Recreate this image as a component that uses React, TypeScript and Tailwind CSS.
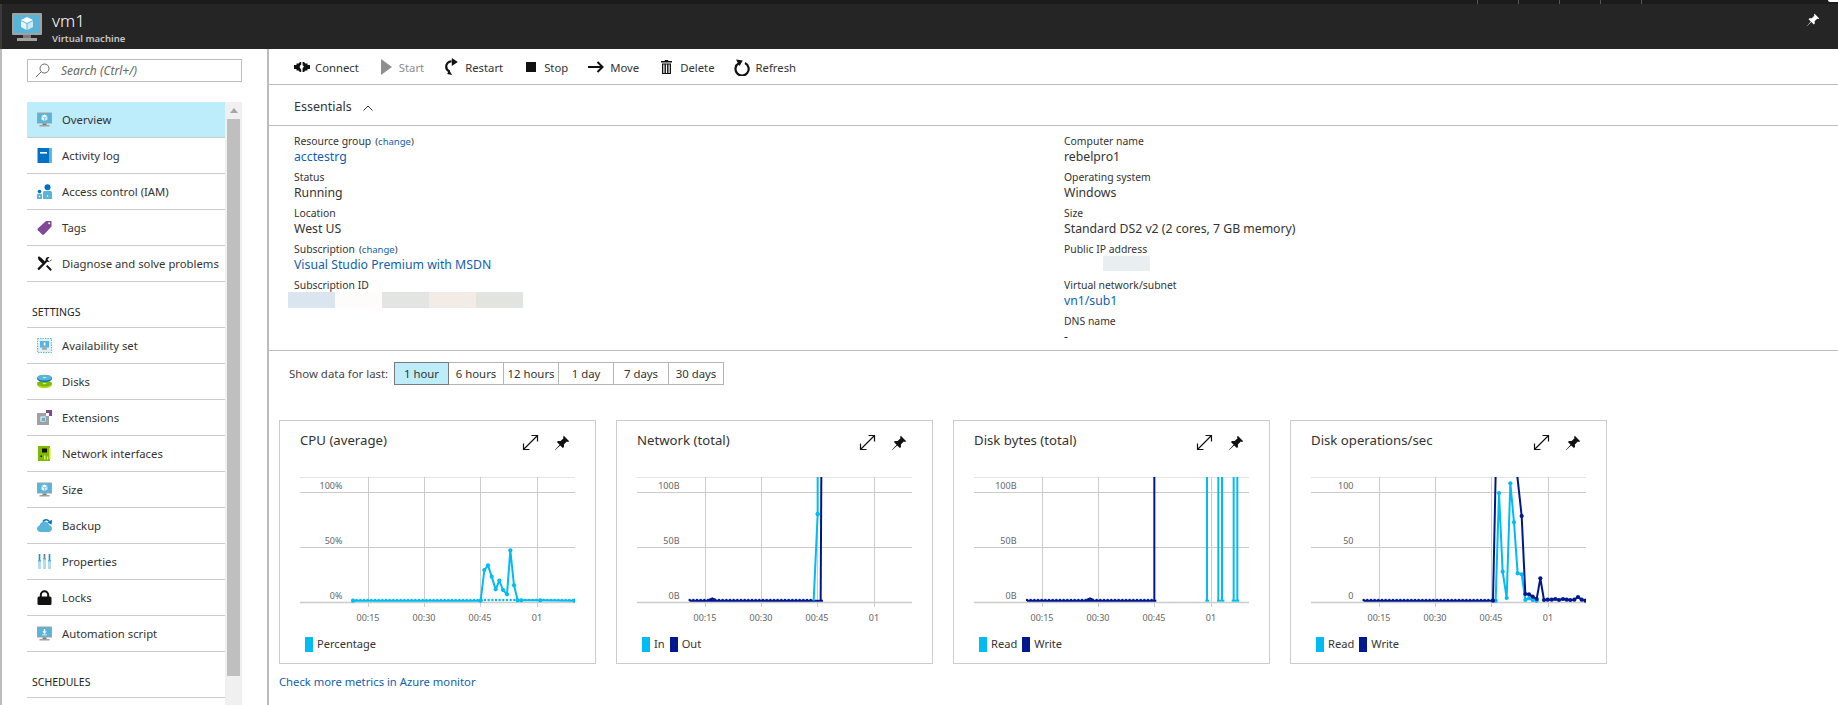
import React from "react";

const Pin = ({ className = "", fill = "#111" }: { className?: string; fill?: string }) => (
  <svg viewBox="0 0 16 16" className={className}>
    <path fill={fill} d="M9.8 .8 15.2 6.2 14 6.9 12.8 6.5 9.9 9.4 10 12 8.9 13.1 6.2 10.4 1 15.2.8 15 5.6 9.8 2.9 7.1 4 6 6.6 6.1 9.5 3.2 9.1 2Z" />
  </svg>
);

const Expand = () => (
  <svg viewBox="0 0 17 17" className="w-[17px] h-[17px]" fill="none" stroke="#111" strokeWidth="1.2">
    <path d="M1.5 15.5 15.5 1.5M9.5 1.5h6v6M1.5 9.5v6h6" />
  </svg>
);

const Monitor = ({ className = "", arrow = false }: { className?: string; arrow?: boolean }) => (
  <svg viewBox="0 0 30 28" className={className}>
    <rect x="0" y="0" width="30" height="22" rx="1" fill="#a0a1a2" />
    <rect x="2" y="2" width="26" height="18" fill="#59b4d9" />
    <rect x="11" y="22" width="8" height="3" fill="#7a7a7a" />
    <rect x="5" y="25" width="20" height="3" fill="#a0a1a2" />
    {arrow ? (
      <path fill="#fff" d="M13.5 5h3v5h3l-4.5 5-4.5-5h3ZM10 16h10v1.5H10Z" />
    ) : (
      <>
        <path fill="#fff" d="M15 4l6 3-6 3-6-3Z" />
        <path fill="#e8f4fa" d="M9 8l5.5 2.8V17L9 14Z" />
        <path fill="#cfe8f3" d="M21 8l-5.5 2.8V17L21 14Z" />
      </>
    )}
  </svg>
);

const I = "w-[15px] h-[15px]";

const menuIcons: Record<string, React.ReactNode> = {
  overview: <Monitor className={I} />,
  log: (
    <svg viewBox="0 0 15 15" className={I}>
      <rect x="0.5" width="14" height="15" fill="#0072c6" />
      <rect x="12" width="2.5" height="15" fill="#59b4d9" />
      <rect x="3" y="4" width="7" height="1.6" fill="#fff" />
    </svg>
  ),
  iam: (
    <svg viewBox="0 0 15 15" className={I}>
      <circle cx="10.5" cy="3.2" r="3" fill="#0072c6" />
      <path fill="#59b4d9" d="M6 15V8.5C6 7.5 7 7 8 7h5c1 0 2 .5 2 1.5V15Z" />
      <circle cx="2.5" cy="7.5" r="1.8" fill="#0072c6" />
      <path fill="#59b4d9" d="M0 15v-4c0-.8.6-1.2 1.2-1.2h2.6c.6 0 1.2.4 1.2 1.2v4Z" />
      <circle cx="2.5" cy="12.5" r=".8" fill="#fff" />
      <circle cx="10.5" cy="12" r=".8" fill="#fff" />
    </svg>
  ),
  tags: (
    <svg viewBox="0 0 15 15" className={I}>
      <path fill="#804998" d="M9 1h5.5v5.5L7 14.5c-.6.5-1.2.5-1.8 0L.8 10.2c-.5-.6-.5-1.2 0-1.8Z" />
      <circle cx="12.2" cy="3.2" r="1" fill="#fff" />
    </svg>
  ),
  diagnose: (
    <svg viewBox="0 0 15 15" className={I}>
      <path fill="#111" d="M1.2 3.6 3.6 1.2 8 5.6 5.6 8ZM9 10.2 10.4 9l4 4c.8 1.2-.2 2.2-1.4 1.4ZM.8 1.2 2 .2l1.5 1.2-2 2Z" />
      <path fill="#111" d="M14.6 3.2 12.2 5.4 10.4 3.6 12.4 1.2C10.4.4 8.2 2 8.6 4.4L.9 12.1c-.9 1 .6 2.6 1.6 1.6l7.7-7.9c2.6.6 5-1.6 4.4-2.6Z" />
    </svg>
  ),
  avail: (
    <svg viewBox="0 0 15 15" className={I}>
      <rect x=".5" y=".5" width="14" height="14" fill="#dff1f8" stroke="#59b4d9" strokeDasharray="1.4 1.1" />
      <rect x="3" y="3" width="9" height="6.5" fill="#59b4d9" />
      <rect x="5" y="9.5" width="5" height="2.2" fill="#a0a1a2" />
      <rect x="6.7" y="4.5" width="1.8" height="3" fill="#fff" />
    </svg>
  ),
  disks: (
    <svg viewBox="0 0 15 15" className={I}>
      <ellipse cx="7.5" cy="10.5" rx="7.5" ry="3.8" fill="#b8d432" />
      <ellipse cx="7.5" cy="9.5" rx="7.5" ry="3" fill="#7fba00" />
      <ellipse cx="7.5" cy="9.5" rx="2" ry=".7" fill="#d6e88f" />
      <ellipse cx="7.5" cy="4.5" rx="7.5" ry="3.6" fill="#0072c6" />
      <ellipse cx="7.5" cy="3.6" rx="7.5" ry="2.9" fill="#59b4d9" />
      <ellipse cx="7.5" cy="3.6" rx="2" ry=".7" fill="#d5edf7" />
    </svg>
  ),
  ext: (
    <svg viewBox="0 0 15 15" className={I}>
      <path fill="#a0a1a2" d="M0 3h9v3h3v9H0Z" />
      <rect x="3.5" y="6.5" width="5" height="5" fill="#fff" />
      <rect x="4.5" y="7.5" width="3.5" height="3.5" fill="#59b4d9" />
      <path fill="#804998" d="M9 0h6v6h-3V3H9Z" />
    </svg>
  ),
  nic: (
    <svg viewBox="0 0 15 15" className={I}>
      <rect x="1" y="0" width="12" height="15" fill="#7fba00" />
      <rect x="12" y="2" width="1.5" height="11" fill="#ffd400" />
      <rect x="5" y="2.5" width="5" height="4" fill="#111" />
      <rect x="3.5" y="9.5" width="1.5" height="1.5" fill="#111" />
      <rect x="7" y="9.5" width="1.5" height="4" fill="#d4e88f" />
      <rect x="10" y="10.5" width="1.2" height="3" fill="#d4e88f" />
    </svg>
  ),
  backup: (
    <svg viewBox="0 0 15 15" className={I}>
      <path fill="#59b4d9" d="M3.5 14C1.5 14 0 12.5 0 10.8c0-1.5 1-2.8 2.4-3C3 5.3 5 3.5 7.5 3.5c2.2 0 4 1.5 4.6 3.4C13.8 7.2 15 8.7 15 10.5 15 12.4 13.5 14 11.5 14Z" />
      <path fill="none" stroke="#0072c6" strokeWidth="1.6" d="M6 3.5C7.5 1.2 10.5 1.2 12 3.2" />
      <path fill="#0072c6" d="M15 1.8 14.6 6.8 10.3 4.2Z" />
    </svg>
  ),
  props: (
    <svg viewBox="0 0 15 15" className={I}>
      <rect x="1" width="3" height="15" fill="#b3dcec" />
      <rect x="6" width="3" height="15" fill="#b3dcec" />
      <rect x="11" width="3" height="15" fill="#b3dcec" />
      <rect x="2" width="1" height="7" fill="#7a7a7a" />
      <rect x="7" width="1" height="5" fill="#7a7a7a" />
      <rect x="12" width="1" height="7" fill="#7a7a7a" />
      <rect x="1" y="6" width="3" height="1.4" fill="#59b4d9" />
      <rect x="6" y="4" width="3" height="1.4" fill="#59b4d9" />
      <rect x="11" y="6" width="3" height="1.4" fill="#59b4d9" />
    </svg>
  ),
  lock: (
    <svg viewBox="0 0 15 15" className={I}>
      <path fill="none" stroke="#111" strokeWidth="2" d="M3.8 7V5a3.7 3.7 0 0 1 7.4 0v2" />
      <rect x="0.5" y="6.5" width="14" height="8.5" rx="1.5" fill="#111" />
    </svg>
  ),
};

const Row = ({ icon, label, active = false }: { icon: React.ReactNode; label: string; active?: boolean }) => (
  <div
    className={`h-[36px] shrink-0 flex items-center gap-[10px] pl-[10px] border-b border-[#cccccc] text-[11.3px] text-[#333] whitespace-nowrap ${
      active ? "bg-[#bdecfa]" : ""
    }`}
  >
    {icon}
    <span className="pt-[2px]">{label}</span>
  </div>
);

const SectionHead = ({ label }: { label: string }) => (
  <div className="h-[46px] shrink-0 flex items-end pb-[6px] pl-[5px] border-b border-[#cccccc] text-[10.5px] text-[#222]">
    {label}
  </div>
);

const Sidebar = () => (
  <aside className="w-[269px] shrink-0 h-full border-l-2 border-r-2 border-[#bcbcbc] flex flex-col overflow-hidden pl-[25px]">
    <div className="mt-[10px] w-[215px] h-[23px] border border-[#bcbcbc] flex items-center pl-[7px] gap-[11px] shrink-0">
      <svg viewBox="0 0 15 15" className="w-[15px] h-[15px]" fill="none" stroke="#666" strokeWidth="1">
        <circle cx="9.5" cy="5.5" r="4.5" />
        <path d="M6.2 8.8 .8 14.2" />
      </svg>
      <span className="italic text-[12px] text-[#666]">Search (Ctrl+/)</span>
    </div>
    <div className="mt-[20px] flex flex-1 min-h-0 w-[215px]">
      <div className="w-[198px] shrink-0 flex flex-col">
        <Row active icon={menuIcons.overview} label="Overview" />
        <Row icon={menuIcons.log} label="Activity log" />
        <Row icon={menuIcons.iam} label="Access control (IAM)" />
        <Row icon={menuIcons.tags} label="Tags" />
        <Row icon={menuIcons.diagnose} label="Diagnose and solve problems" />
        <SectionHead label="SETTINGS" />
        <Row icon={menuIcons.avail} label="Availability set" />
        <Row icon={menuIcons.disks} label="Disks" />
        <Row icon={menuIcons.ext} label="Extensions" />
        <Row icon={menuIcons.nic} label="Network interfaces" />
        <Row icon={<Monitor className={I} />} label="Size" />
        <Row icon={menuIcons.backup} label="Backup" />
        <Row icon={menuIcons.props} label="Properties" />
        <Row icon={menuIcons.lock} label="Locks" />
        <Row icon={<Monitor className={I} arrow />} label="Automation script" />
        <SectionHead label="SCHEDULES" />
      </div>
      <div className="w-[17px] shrink-0 bg-[#f0f0f0] flex flex-col items-center">
        <div className="h-[17px] flex items-center justify-center">
          <svg viewBox="0 0 8 5" className="w-[8px] h-[5px]">
            <path fill="#a6a6a6" d="M4 0l4 5H0Z" />
          </svg>
        </div>
        <div className="w-[13px] h-[557px] bg-[#bfbfbf]" />
      </div>
    </div>
  </aside>
);

const ToolItem = ({ icon, label, className = "", muted = false }: { icon: React.ReactNode; label: string; className?: string; muted?: boolean }) => (
  <div className={`flex items-center text-[11.3px] ${muted ? "text-[#8c8c8c]" : "text-[#333]"} ${className}`}>
    {icon}
    <span className="pt-[3px]">{label}</span>
  </div>
);

const Toolbar = () => (
  <div className="h-[36px] shrink-0 border-b border-[#bcbcbc] flex items-center pl-[25px]">
    <ToolItem
      label="Connect"
      icon={
        <svg viewBox="0 0 16 10" className="w-[16px] h-[10px] mr-[5px]">
          <path fill="#111" d="M0 3h2.5V1.5h2L6 0h1.2v2.5L5.8 4v1.8l1.4 1.6V10H6L4.5 8.5h-2V7H0Z" />
          <path fill="#111" d="M16 3h-2.5V1.5h-2L10 0H8.6v3L10 4.5 8.6 6.2V10H10l1.5-1.5h2V7H16Z" />
        </svg>
      }
    />
    <ToolItem
      muted
      className="ml-[22px]"
      label="Start"
      icon={
        <svg viewBox="0 0 11 16" className="w-[11px] h-[16px] mr-[7px]">
          <path fill="#8f8f8f" d="M0 0l11 8-11 8Z" />
        </svg>
      }
    />
    <ToolItem
      className="ml-[21px]"
      label="Restart"
      icon={
        <svg viewBox="0 0 13 17" className="w-[13px] h-[17px] mr-[7px]" fill="none">
          <path stroke="#111" strokeWidth="2.2" d="M6.5 3.4C3.4 3.6 1.2 5.8 1.2 8.6c0 2.3 1.4 4.2 3.4 5" />
          <path fill="#111" d="M6.8 0l6 4-6 4ZM4 12l3.2 5-5-1Z" />
        </svg>
      }
    />
    <ToolItem
      className="ml-[23px]"
      label="Stop"
      icon={<div className="w-[10px] h-[10px] bg-[#111] mr-[8px]" />}
    />
    <ToolItem
      className="ml-[20px]"
      label="Move"
      icon={
        <svg viewBox="0 0 16 12" className="w-[16px] h-[12px] mr-[6px]" fill="none" stroke="#111" strokeWidth="2">
          <path d="M0 6h14.5M9.5 1l5 5-5 5" />
        </svg>
      }
    />
    <ToolItem
      className="ml-[22px]"
      label="Delete"
      icon={
        <svg viewBox="0 0 11 14" className="w-[11px] h-[14px] mr-[8px]">
          <path fill="#111" d="M3.8 0h3.4v1.1H11v1.4H0V1.1h3.8ZM1 3.4h9V14H1Zm1.3 1.1V13h1.2V4.5Zm2.6 0V13h1.2V4.5Zm2.6 0V13h1.2V4.5Z" fillRule="evenodd" />
        </svg>
      }
    />
    <ToolItem
      className="ml-[19px]"
      label="Refresh"
      icon={
        <svg viewBox="0 0 16 18" className="w-[16px] h-[18px] mr-[6px]" fill="none">
          <path stroke="#111" strokeWidth="2.2" d="M11 5a6.6 6.6 0 1 1-6.2.2" />
          <path fill="#111" d="M2 1.6 8.8 2.6 5.6 8Z" />
        </svg>
      }
    />
  </div>
);

const Label = ({ children }: { children: React.ReactNode }) => (
  <div className="h-[15px] leading-[17px] text-[10.4px] text-[#333] whitespace-nowrap">{children}</div>
);
const Value = ({ children, link = false }: { children: React.ReactNode; link?: boolean }) => (
  <div className={`h-[21px] leading-[18px] text-[12.25px] whitespace-nowrap ${link ? "text-[#0f5fae]" : "text-[#333]"}`}>{children}</div>
);
const Change = () => <span className="text-[9.5px] ml-[4px] text-[#333]">(<span className="text-[#0f5fae]">change</span>)</span>;

const Essentials = () => (
  <>
    <div className="h-[41px] shrink-0 border-b border-[#bcbcbc] flex items-center pl-[25px] pt-[5px] gap-[11px] text-[12.5px] text-[#333]">
      <span>Essentials</span>
      <svg viewBox="0 0 10 6" className="w-[10px] h-[6px]" fill="none" stroke="#333" strokeWidth="1">
        <path d="M.5 5.5 5 1l4.5 4.5" />
      </svg>
    </div>
    <div className="h-[225px] shrink-0 border-b border-[#bcbcbc] grid grid-cols-[770px_1fr] pl-[25px] pt-[7px]">
      <div>
        <Label>Resource group<Change /></Label>
        <Value link>acctestrg</Value>
        <Label>Status</Label>
        <Value>Running</Value>
        <Label>Location</Label>
        <Value>West US</Value>
        <Label>Subscription<Change /></Label>
        <Value link>Visual Studio Premium with MSDN</Value>
        <Label>Subscription ID</Label>
        <div className="flex -ml-[6px] h-[16px]">
          <div className="w-[47px] bg-[#dbe5ef]" />
          <div className="w-[47px] bg-[#fdfcfa]" />
          <div className="w-[47px] bg-[#e3e5e2]" />
          <div className="w-[47px] bg-[#f3ebe5]" />
          <div className="w-[47px] bg-[#e2e4e0]" />
        </div>
      </div>
      <div>
        <Label>Computer name</Label>
        <Value>rebelpro1</Value>
        <Label>Operating system</Label>
        <Value>Windows</Value>
        <Label>Size</Label>
        <Value>Standard DS2 v2 (2 cores, 7 GB memory)</Value>
        <Label>Public IP address</Label>
        <div className="h-[21px]">
          <div className="ml-[39px] w-[47px] h-[15px] bg-[#e9eef1]" />
        </div>
        <Label>Virtual network/subnet</Label>
        <Value link>vn1/sub1</Value>
        <Label>DNS name</Label>
        <Value>-</Value>
      </div>
    </div>
  </>
);

const ranges = ["1 hour", "6 hours", "12 hours", "1 day", "7 days", "30 days"];

const RangeRow = () => (
  <div className="h-[23px] mt-[11px] shrink-0 flex items-center pl-[20px] text-[11.4px] text-[#333]">
    <span className="w-[105px] shrink-0 text-[#444]">Show data for last:</span>
    <div className="flex h-[23px]">
      {ranges.map((r, i) => (
        <div
          key={r}
          className={`w-[55px] flex items-center justify-center border-y border-r ${
            i === 0 ? "bg-[#bdecfa] border-[#7a7a7a] border-l" : "border-[#b5b5b5]"
          }`}
        >
          {r}
        </div>
      ))}
    </div>
  </div>
);

type Series = { color: string; pts: number[][]; dots?: boolean; width?: number };
const CY = "#00bcf2";
const NV = "#00188f";

const base = (a: number, b: number, color: string, y = 572): Series => ({ color, pts: [[a, y], [b, y]] });

const BaseDots = ({ a, b, color, off }: { a: number; b: number; color: string; off: number }) => {
  const d = [];
  for (let x = a; x <= b; x += 11) d.push(x);
  return (
    <>
      {d.map((x) => (
        <circle key={x} cx={(x - off) / 3} cy={(570 - 30) / 3} r="1.2" fill={color} />
      ))}
    </>
  );
};

type ChartData = {
  title: string;
  id: string;
  off: number;
  yl: string[];
  series: Series[];
  base: { a: number; b: number; color: string }[];
  legend: { c: string; t: string }[];
};

const charts: ChartData[] = [
  {
    title: "CPU (average)",
    id: "c1",
    off: 28,
    yl: ["100%", "50%", "0%"],
    base: [{ a: 250, b: 915, color: CY }],
    series: [
      {
        color: CY,
        dots: true,
        pts: [[250, 572], [633, 572], [644, 480], [655, 466], [666, 500], [678, 538], [689, 512], [700, 540], [712, 553], [722, 421], [733, 526], [744, 571], [755, 571], [812, 571], [915, 572]],
      },
    ],
    legend: [{ c: CY, t: "Percentage" }],
  },
  {
    title: "Network (total)",
    id: "c2",
    off: 19,
    yl: ["100B", "50B", "0B"],
    base: [{ a: 240, b: 612, color: NV }],
    series: [
      base(240, 640, NV),
      { color: CY, pts: [[612, 572], [624, 312], [624, 190]], dots: false },
      { color: CY, pts: [[624, 312], [624, 312]], dots: true },
      { color: NV, pts: [[633, 572], [635, 190]] },
      { color: NV, pts: [[298, 570], [308, 565], [318, 570]] },
    ],
    legend: [{ c: CY, t: "In" }, { c: NV, t: "Out" }],
  },
  {
    title: "Disk bytes (total)",
    id: "c3",
    off: 10,
    yl: ["100B", "50B", "0B"],
    base: [{ a: 232, b: 610, color: NV }],
    series: [
      base(232, 620, NV),
      base(767, 778, CY),
      base(802, 824, CY),
      base(846, 869, CY),
      { color: CY, pts: [[772, 572], [772, 190]] },
      { color: CY, pts: [[806, 572], [806, 190]] },
      { color: CY, pts: [[817, 572], [817, 190]] },
      { color: CY, pts: [[852, 572], [852, 190]] },
      { color: CY, pts: [[863, 572], [863, 190]] },
      { color: NV, pts: [[614, 572], [614, 190]] },
      { color: NV, pts: [[411, 570], [421, 565], [431, 570]] },
    ],
    legend: [{ c: CY, t: "Read" }, { c: NV, t: "Write" }],
  },
  {
    title: "Disk operations/sec",
    id: "c4",
    off: 31,
    yl: ["100", "50", "0"],
    base: [{ a: 252, b: 640, color: NV }],
    series: [
      base(252, 652, NV),
      {
        color: CY,
        dots: true,
        pts: [[648, 572], [658, 249], [669, 485], [681, 564], [692, 220], [703, 337], [714, 490], [726, 493], [737, 570], [748, 565], [759, 570], [771, 572]],
      },
      {
        color: NV,
        dots: true,
        pts: [[640, 572], [648, 190], [712, 190], [726, 318], [737, 552], [748, 553], [759, 560], [771, 567], [782, 505], [793, 570], [804, 569], [816, 569], [827, 567], [838, 570], [850, 567], [861, 569], [872, 570], [884, 569], [895, 561], [906, 569], [918, 572]],
      },
    ],
    legend: [{ c: CY, t: "Read" }, { c: NV, t: "Write" }],
  },
];

const Chart = ({ d }: { d: ChartData }) => {
  const gx = [89, 145, 201, 258];
  const gl = ["00:15", "00:30", "00:45", "01"];
  const gy = [72, 127, 182];
  const fx = (x: number) => (x - d.off) / 3;
  const fy = (y: number) => (y - 30) / 3;
  return (
    <svg viewBox="1 50 315 160" className="block w-[315px] h-[160px]">
      <defs>
        <clipPath id={d.id}>
          <rect x="1" y="57" width="295" height="130" />
        </clipPath>
      </defs>
      <line x1="21" x2="296" y1="57.5" y2="57.5" stroke="#e4e4e4" />
      {gy.map((y) => (
        <line key={y} x1="21" x2="296" y1={y + 0.5} y2={y + 0.5} stroke="#cccccc" strokeWidth={y === 182 ? 1.5 : 1} />
      ))}
      {gx.map((x) => (
        <line key={x} x1={x + 0.5} x2={x + 0.5} y1="57" y2="187" stroke="#cccccc" />
      ))}
      {d.yl.map((t, i) => (
        <text key={t} x="63.5" y={[68.5, 123.5, 178.5][i]} textAnchor="end" fontSize="9" fill="#666" fontFamily="'Noto Sans', sans-serif">
          {t}
        </text>
      ))}
      {gl.map((t, i) => (
        <text key={t} x={gx[i]} y="200.5" textAnchor="middle" fontSize="9" fill="#666" fontFamily="'Noto Sans', sans-serif">
          {t}
        </text>
      ))}
      <g clipPath={`url(#${d.id})`}>
        {d.series.map((s, i) => (
          <g key={i}>
            <polyline
              fill="none"
              stroke={s.color}
              strokeWidth="2"
              strokeLinejoin="round"
              points={s.pts.map((p) => `${fx(p[0])},${fy(p[1])}`).join(" ")}
            />
            {s.dots && s.pts.map((p, j) => <circle key={j} cx={fx(p[0])} cy={fy(p[1])} r="2.1" fill={s.color} />)}
          </g>
        ))}
        {d.base.map((b, i) => (
          <BaseDots key={i} a={b.a} b={b.b} color={b.color} off={d.off} />
        ))}
      </g>
    </svg>
  );
};

const Card = ({ d }: { d: ChartData }) => (
  <div className="w-[317px] h-[244px] shrink-0 border border-[#cccccc] flex flex-col">
    <div className="h-[49px] shrink-0 flex items-start justify-between pl-[20px] pr-[25px] pt-[10px]">
      <span className="text-[13.2px] leading-[19px] text-[#333]">{d.title}</span>
      <div className="flex items-center gap-[15px] pt-[3px]">
        <Expand />
        <Pin className="w-[16px] h-[16px]" />
      </div>
    </div>
    <Chart d={d} />
    <div className="flex items-center h-[15px] mt-[7px] pl-[25px] text-[11.1px] text-[#333]">
      {d.legend.map((l) => (
        <div key={l.t} className="flex items-center mr-[5px]">
          {l.c === CY ? <div className="w-[8px] h-[15px] bg-[#00bcf2] mr-[4px]" /> : <div className="w-[8px] h-[15px] bg-[#00188f] mr-[4px]" />}
          <span>{l.t}</span>
        </div>
      ))}
    </div>
  </div>
);

export default function App() {
  return (
    <div className="w-[1838px] h-[705px] overflow-hidden bg-white flex flex-col font-['Noto_Sans','Open_Sans',sans-serif]">
      <div className="h-[4px] shrink-0 bg-[#1b1b1b] flex justify-end items-start">
        <div className="flex gap-[40px]">
          {[0, 1, 2, 3, 4].map((i) => (
            <div key={i} className="w-px h-[4px] bg-[#555]" />
          ))}
        </div>
        <div className="w-[186px]" />
        <div className="w-[10px] h-[2px] bg-white rounded-bl-full" />
      </div>
      <header className="h-[45px] shrink-0 bg-[#252525] flex items-center pl-[12px] pr-[18px] border-l-2 border-[#3a3a3a]">
        <Monitor className="w-[30px] h-[28px] -ml-[2px]" />
        <div className="ml-[10px] flex flex-col">
          <span className="text-[17px] leading-[24px] font-light text-white">vm1</span>
          <span className="text-[9.5px] leading-[12px] font-semibold text-[#c8c8c8]">Virtual machine</span>
        </div>
        <Pin className="w-[14px] h-[14px] ml-auto mb-[14px]" fill="#fff" />
      </header>
      <div className="flex flex-1 min-h-0">
        <Sidebar />
        <main className="flex-1 min-w-0 flex flex-col">
          <Toolbar />
          <Essentials />
          <RangeRow />
          <div className="flex gap-[20px] pl-[10px] mt-[35px] shrink-0">
            {charts.map((c) => (
              <Card key={c.id} d={c} />
            ))}
          </div>
          <div className="pl-[10px] mt-[10px] text-[11.25px] text-[#0f5fae]">Check more metrics in Azure monitor</div>
        </main>
      </div>
    </div>
  );
}
